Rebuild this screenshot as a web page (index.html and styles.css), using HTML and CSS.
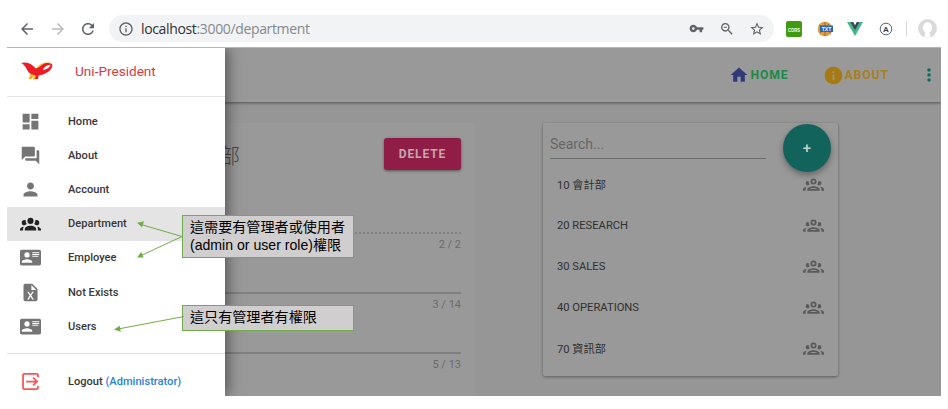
FILE: index.html
```html
<!DOCTYPE html>
<html lang="zh-Hant">
<head>
<meta charset="utf-8">
<title>Department</title>
<link rel="stylesheet" href="styles.css">
</head>
<body>
<svg class="defs" width="0" height="0">
  <symbol id="group" viewBox="0 0 24 24"><path d="M12,5A3.5,3.5 0 0,0 8.5,8.5A3.5,3.5 0 0,0 12,12A3.5,3.5 0 0,0 15.5,8.5A3.5,3.5 0 0,0 12,5M12,7A1.5,1.5 0 0,1 13.5,8.5A1.5,1.5 0 0,1 12,10A1.5,1.5 0 0,1 10.5,8.5A1.5,1.5 0 0,1 12,7M5.5,8A2.5,2.5 0 0,0 3,10.5C3,11.44 3.53,12.25 4.29,12.68C4.65,12.88 5.06,13 5.5,13C5.94,13 6.35,12.88 6.71,12.68C7.08,12.47 7.39,12.17 7.62,11.81C6.89,10.86 6.5,9.7 6.5,8.5C6.5,8.41 6.5,8.31 6.5,8.22C6.2,8.08 5.86,8 5.5,8M18.5,8C18.14,8 17.8,8.08 17.5,8.22C17.5,8.31 17.5,8.41 17.5,8.5C17.5,9.7 17.11,10.86 16.38,11.81C16.5,12 16.63,12.15 16.78,12.3C16.94,12.45 17.1,12.58 17.29,12.68C17.65,12.88 18.06,13 18.5,13C18.94,13 19.35,12.88 19.71,12.68C20.47,12.25 21,11.44 21,10.5A2.5,2.5 0 0,0 18.5,8M12,14C9.66,14 5,15.17 5,17.5V19H19V17.5C19,15.17 14.34,14 12,14M4.71,14.55C2.78,14.78 0,15.76 0,17.5V19H3V17.07C3,16.06 3.69,15.22 4.71,14.55M19.29,14.55C20.31,15.22 21,16.06 21,17.07V19H24V17.5C24,15.76 21.22,14.78 19.29,14.55M12,16C13.53,16 15.24,16.5 16.23,17H7.77C8.76,16.5 10.47,16 12,16Z"/></symbol>
  <symbol id="card" viewBox="0 0 24 24"><path d="M2,3H22C23.05,3 24,3.95 24,5V19C24,20.05 23.05,21 22,21H2C.95,21 0,20.05 0,19V5C0,3.95 .95,3 2,3M14,6V7H22V6H14M14,8V9H22V8H14M14,10V11H21V10H14M8,13.91C6,13.91 2,15 2,17V18H14V17C14,15 10,13.91 8,13.91M8,6A3,3 0 0,0 5,9A3,3 0 0,0 8,12A3,3 0 0,0 11,9A3,3 0 0,0 8,6Z"/></symbol>
</svg>
<div class="window">
  <div class="browser">
    <svg class="nav" viewBox="0 0 24 24"><path d="M20 11H7.83l5.59-5.59L12 4l-8 8 8 8 1.41-1.41L7.83 13H20v-2z"/></svg>
    <svg class="nav nav-off" viewBox="0 0 24 24"><path d="M4 11H16.17l-5.59-5.59L12 4l8 8-8 8-1.41-1.41L16.17 13H4v-2z"/></svg>
    <svg class="nav" viewBox="0 0 24 24"><path d="M17.65 6.35C16.2 4.9 14.21 4 12 4c-4.42 0-7.99 3.58-7.99 8s3.57 8 7.99 8c3.73 0 6.84-2.55 7.73-6h-2.08c-.82 2.33-3.04 4-5.65 4-3.31 0-6-2.69-6-6s2.69-6 6-6c1.66 0 3.14.69 4.22 1.78L13 11h7V4l-2.35 2.35z"/></svg>
    <div class="address">
      <svg class="site" viewBox="0 0 24 24"><path d="M11 17h2v-6h-2v6zm1-15C6.48 2 2 6.48 2 12s4.48 10 10 10 10-4.48 10-10S17.52 2 12 2zm0 18c-4.41 0-8-3.59-8-8s3.59-8 8-8 8 3.59 8 8-3.59 8-8 8zM11 9h2V7h-2v2z"/></svg>
      <span class="url">localhost<span>:3000/department</span></span>
      <svg class="tool key" viewBox="0 0 24 24"><path d="M12.65 10C11.83 7.67 9.61 6 7 6c-3.31 0-6 2.69-6 6s2.69 6 6 6c2.61 0 4.83-1.67 5.65-4H17v4h4v-4h2v-4H12.65zM7 14c-1.1 0-2-.9-2-2s.9-2 2-2 2 .9 2 2-.9 2-2 2z"/></svg>
      <svg class="tool" viewBox="0 0 24 24"><path d="M15.5 14h-.79l-.28-.27C15.41 12.59 16 11.11 16 9.5 16 5.91 13.09 3 9.5 3S3 5.91 3 9.5 5.91 16 9.5 16c1.61 0 3.09-.59 4.23-1.57l.27.28v.79l5 4.99L20.49 19l-4.99-5zm-6 0C7.01 14 5 11.99 5 9.5S7.01 5 9.5 5 14 7.01 14 9.5 11.99 14 9.5 14zM7 8.8h5v1.4H7z"/></svg>
      <svg class="tool" viewBox="0 0 24 24"><path d="M22 9.24l-7.19-.62L12 2 9.19 8.63 2 9.24l5.46 4.73L5.82 21 12 17.27 18.18 21l-1.63-7.03L22 9.24zM12 15.4l-3.76 2.27 1-4.28-3.32-2.88 4.38-.38L12 6.1l1.71 4.04 4.38.38-3.32 2.88 1 4.28L12 15.4z"/></svg>
    </div>
    <div class="extensions">
      <svg viewBox="0 0 16 16"><rect width="16" height="16" rx="2" fill="#3f9c10"/><text class="ext-cors" x="8" y="10.500" text-anchor="middle" textLength="12" lengthAdjust="spacingAndGlyphs">CORS</text></svg>
      <svg viewBox="0 0 16 16"><circle cx="8" cy="8" r="7.3" fill="#e59a35"/><path d="M2 4l12 8M8 1v14M3 12l9-9" stroke="#8d6a3d" fill="none"/><rect x="3" y="4.5" width="13" height="6.5" fill="#2767b5"/><text class="ext-txt" x="9.5" y="10" text-anchor="middle">TXT</text></svg>
      <svg viewBox="0 0 16 16"><path d="M0 1h3.2L8 9.2 12.8 1H16L8 15z" fill="#41b883"/><path d="M3.2 1h3L8 4.2 9.8 1h3L8 9.4z" fill="#35495e"/></svg>
      <svg viewBox="0 0 16 16"><circle cx="8" cy="8" r="5.8" fill="none" stroke="#40566e" stroke-width=".9"/><text class="ext-a" x="8" y="11" text-anchor="middle">A</text></svg>
      <i class="bar"></i>
      <svg class="profile" viewBox="0 0 19 19"><circle cx="9.5" cy="9.5" r="9.4" fill="#dadada"/><path d="M9.5 3.2a4.6 5 0 0 0-4.6 5c0 2.3 1.1 4 2.4 5.3L6.5 18q3 1.2 6 0l-.8-4.5c1.3-1.3 2.4-3 2.4-5.3a4.6 5 0 0 0-4.6-5z" fill="#fff"/></svg>
    </div>
  </div>

  <div class="app">
    <header class="appbar">
      <a class="link home"><svg viewBox="0 0 24 24"><path d="M10 20v-6h4v6h5v-8h3L12 3 2 12h3v8z"/></svg><span>HOME</span></a>
      <a class="link about"><svg viewBox="0 0 24 24"><path d="M12 2C6.48 2 2 6.48 2 12s4.48 10 10 10 10-4.48 10-10S17.52 2 12 2zm1 15h-2v-6h2v6zm0-8h-2V7h2v2z"/></svg><span>ABOUT</span></a>
      <svg class="more" viewBox="0 0 4 14"><circle cx="2" cy="2" r="1.8"/><circle cx="2" cy="7" r="1.8"/><circle cx="2" cy="12" r="1.8"/></svg>
    </header>
    <main class="content">
      <section class="editor">
        <div class="editor-head"><h1>會計部</h1><button class="delete">DELETE</button></div>
        <div class="field locked"><small>2 / 2</small></div>
        <div class="field"><small>3 / 14</small></div>
        <div class="field"><small>5 / 13</small></div>
      </section>
      <section class="list">
        <div class="search"><span>Search...</span></div>
        <button class="add">+</button>
        <div class="row"><span>10 會計部</span><svg><use href="#group"/></svg></div>
        <div class="row"><span>20 RESEARCH</span><svg><use href="#group"/></svg></div>
        <div class="row"><span>30 SALES</span><svg><use href="#group"/></svg></div>
        <div class="row"><span>40 OPERATIONS</span><svg><use href="#group"/></svg></div>
        <div class="row"><span>70 資訊部</span><svg><use href="#group"/></svg></div>
      </section>
    </main>

    <aside class="drawer">
      <div class="brand">
        <svg viewBox="0 0 32 18"><path d="M10 11L7.500 17h3.200L13 13zM14 12l-2.500 5.400h3L17 13z" fill="#f5b21c"/><path d="M14 8.500C17 2 24-.5 30 .8c-4 .4-7 2.200-9 5.200l-5 4z" fill="#f8b52a"/><path d="M0 1c4-1.200 8-.6 11 2l4 3.400c3-.6 4-1.800 6-3.400C24 .8 28 .6 31 2c1.500 4-3 9-10 10.800l-3.300.6L17 17h-3l1-3.600c-4-.4-7-2-8.500-4.900L4.800 5.500C3.500 3 2 2 0 1z" fill="#ed1c24"/><path d="M22.500 6.500c2-2.500 4.500-3.700 7.200-3.700C28.500 5.600 26 7.300 22 8.300z" fill="#fff"/></svg>
        <span>Uni-President</span>
      </div>
      <nav>
        <a class="item"><svg viewBox="0 0 24 24"><path d="M3 13h8V3H3v10zm0 8h8v-6H3v6zm10 0h8V11h-8v10zm0-18v6h8V3h-8z"/></svg>Home</a>
        <a class="item"><svg viewBox="0 0 24 24"><path d="M21 6h-2v9H6v2c0 .55.45 1 1 1h11l4 4V7c0-.55-.45-1-1-1zm-4 6V3c0-.55-.45-1-1-1H3c-.55 0-1 .45-1 1v14l4-4h10c.55 0 1-.45 1-1z"/></svg>About</a>
        <a class="item"><svg viewBox="0 0 24 24"><path d="M12 12c2.21 0 4-1.79 4-4s-1.79-4-4-4-4 1.79-4 4 1.79 4 4 4zm0 2c-2.67 0-8 1.34-8 4v2h16v-2c0-2.66-5.33-4-8-4z"/></svg>Account</a>
        <a class="item active"><svg viewBox="0 0 24 24"><path d="M12,5.500A3.500,3.500 0 0,1 15.500,9A3.500,3.500 0 0,1 12,12.500A3.500,3.500 0 0,1 8.500,9A3.500,3.500 0 0,1 12,5.500M5,8C5.560,8 6.080,8.150 6.530,8.420C6.380,9.850 6.800,11.270 7.660,12.380C7.160,13.340 6.160,14 5,14A3,3 0 0,1 2,11A3,3 0 0,1 5,8M19,8A3,3 0 0,1 22,11A3,3 0 0,1 19,14C17.840,14 16.840,13.340 16.340,12.380C17.200,11.270 17.620,9.850 17.470,8.420C17.920,8.150 18.440,8 19,8M5.500,18.250C5.500,16.180 8.410,14.500 12,14.500C15.590,14.500 18.500,16.180 18.500,18.250V20H5.500V18.250M0,20V18.500C0,17.110 1.890,15.940 4.450,15.600C3.860,16.280 3.500,17.220 3.500,18.250V20H0M24,20H20.500V18.250C20.500,17.220 20.140,16.280 19.550,15.600C22.110,15.940 24,17.110 24,18.500V20Z"/></svg>Department</a>
        <a class="item"><svg><use href="#card"/></svg>Employee</a>
        <a class="item"><svg viewBox="0 0 24 24"><path d="M14,2H6A2,2 0 0,0 4,4V20A2,2 0 0,0 6,22H18A2,2 0 0,0 20,20V8L14,2M15.8,20H14L12,16.6L10,20H8.2L11.1,15.5L8.2,11H10L12,14.4L14,11H15.8L12.9,15.5L15.8,20M13,9V3.5L18.5,9H13Z"/></svg>Not Exists</a>
        <a class="item"><svg><use href="#card"/></svg>Users</a>
      </nav>
      <a class="item logout"><svg viewBox="0 0 24 24"><path d="M20.500 7V4.500a1.300 1.300 0 0 0-1.300-1.300H4.800a1.300 1.300 0 0 0-1.300 1.300v15a1.300 1.300 0 0 0 1.300 1.300h14.400a1.300 1.300 0 0 0 1.300-1.300V17M7 12h12.500M15 7.500l4.500 4.500-4.500 4.500"/></svg><span>Logout <b>(Administrator)</b></span></a>
    </aside>
  </div>

  <div class="callout roles">這需要有管理者或使用者<br>(admin or user role)權限</div>
  <div class="callout admin">這只有管理者有權限</div>
  <svg class="arrows" viewBox="100 210 90 130"><path d="M182 236.500L141 224.500M182 236.500L141 255.500M184 316.500L118 329"/><path class="tip" d="M137 222.700l7-1.400-2 6zM137 257.500l4.200-5.600 2.500 5.500zM114 329.600l5.800-3.900 1 6z"/></svg>
</div>
</body>
</html>
```

FILE: styles.css
```css
* { box-sizing: border-box; }
body { margin: 0; background: #fff; font-family: Roboto, "Noto Sans CJK TC", sans-serif; }
svg { display: block; flex: none; fill: currentColor; }
.defs { position: absolute; }
.window { position: relative; width: 934px; margin-left: 7px; overflow: hidden; }

.browser { height: 48px; padding-top: 10px; display: flex; align-items: center; border-bottom: 1px solid #b5b5b5; color: #5f6368; }
.nav { width: 18px; height: 18px; margin: 0 1px 0 11px; }
.nav + .nav { margin-left: 11.500px; }
.nav-off { color: #b9bbbe; }
.address { display: flex; align-items: center; width: 665px; height: 27px; margin-left: 11px; padding: 0 9px 0 9px; border-radius: 14px; background: #f1f3f4; }
.site { width: 16px; height: 16px; }
.url { flex: 1; margin-left: 7px; font: 14px "Open Sans", sans-serif; letter-spacing: -.35px; color: #303236; }
.url span { color: #85898d; }
.tool { width: 16px; height: 16px; margin-left: 14.500px; }
.tool.key { width: 15px; height: 15px; }
.extensions { display: flex; align-items: center; gap: 14.500px; margin-left: 12px; }
.extensions svg { width: 16px; height: 16px; }
.ext-cors { font: bold 6px "Liberation Sans", sans-serif; fill: #fff; }
.ext-txt { font: bold 5px "Liberation Sans", sans-serif; fill: #fff; }
.ext-a { font: bold 8px "Liberation Sans", sans-serif; fill: #2c4059; }
.bar { width: 1px; height: 15px; background: #d5d7d9; margin: 0 -4px 0 -2px; }
.extensions .profile { width: 19px; height: 19px; }

.app { position: relative; height: 348px; overflow: hidden; background: #969696; display: flex; flex-direction: column; }
.appbar { position: relative; height: 54px; flex: none; display: flex; align-items: center; justify-content: flex-end; padding-right: 10px; background: #999; box-shadow: 0 1px 3px rgba(0,0,0,.45); }
.link { display: flex; align-items: center; font-size: 12.200px; font-weight: 700; letter-spacing: .9px; }
.home { color: #1c8a45; margin-right: 34px; }
.home svg { width: 20px; height: 20px; color: #303a7a; margin-right: 1px; }
.about { color: #a87f1c; margin-right: 38px; }
.about svg { width: 21px; height: 21px; color: #a67a10; margin-right: 1px; }
.more { width: 4px; height: 14px; color: #0d6b62; }

.content { display: flex; align-items: flex-start; padding-top: 21px; }
.editor { width: 468px; height: 290px; padding: 15px 14px 0 170px; background: #999; border-radius: 3px; }
.editor-head { display: flex; justify-content: space-between; align-items: center; height: 32px; }
h1 { margin: 0; font: 300 21px/32px "Noto Sans CJK TC", sans-serif; color: #484848; }
.delete { width: 77px; height: 32px; padding: 0; border: 0; border-radius: 3px; background: #8f1d45; color: #c4a6b0; font: 700 12px Roboto, sans-serif; letter-spacing: .9px; box-shadow: 0 1px 3px rgba(0,0,0,.45); }
.field { height: 60px; margin-left: -150px; border-top: 2px solid #808080; padding-top: 4px; text-align: right; }
.field.locked { margin-top: 62px; border-top: 2px dotted #828282; }
.field small { display: block; font-size: 11px; line-height: 14px; color: #6a6a6a; }

.list { position: relative; width: 295px; height: 253px; margin-left: 68px; padding: 6px 14px 0 7px; background: #999; border-radius: 2px; box-shadow: 0 1px 3px rgba(0,0,0,.4); }
.search { width: 216px; height: 30px; border-bottom: 1px solid #6d6d6d; font-size: 14px; line-height: 31px; color: #666; margin-bottom: 5px; }
.add { position: absolute; top: 1px; right: 7px; width: 48px; height: 48px; padding: 0; border: 0; border-radius: 50%; background: #11635b; color: #bcd0ce; font: 500 15px Roboto, sans-serif; box-shadow: 0 3px 6px rgba(0,0,0,.35); }
.row { display: flex; align-items: center; justify-content: space-between; height: 41px; padding-left: 7px; font-size: 11.200px; color: #303030; }
.row span { padding-bottom: 1px; }
.row svg { width: 21px; height: 21px; color: #5a5a5a; }

.drawer { position: absolute; left: 0; top: 0; bottom: 0; width: 218px; background: #fff; box-shadow: 2px 0 14px rgba(0,0,0,.5); }
.brand { display: flex; align-items: center; height: 49px; padding: 0 0 2px 14px; border-bottom: 1px solid #e4e4e4; font-size: 13.600px; color: #d93a3e; }
.brand svg { width: 32px; height: 18px; margin-right: 22px; }
nav { padding: 7px 0 10px; border-bottom: 1px solid #e0e0e0; }
.item { display: flex; align-items: center; height: 34.200px; padding-left: 13px; font-size: 11.100px; font-weight: 500; color: #383838; }
.item svg { width: 21px; height: 21px; margin-right: 27px; color: #757575; }
.item.active { background: #e4e4e4; }
.item.active svg { color: #222; }
.item.logout { margin-top: 10px; }
.item.logout svg { fill: none; stroke: #ff5252; stroke-width: 2; }
.logout b { font-weight: 500; color: #2b7fdb; }

.callout { position: absolute; left: 175px; width: 172px; padding: 2px 7px; border: 1px solid #70ad47; background: #d0cece; color: #000; font: 14.100px/18px "Liberation Sans", "Noto Sans CJK TC", sans-serif; white-space: nowrap; }
.roles { top: 215px; height: 43px; }
.admin { top: 305px; height: 26px; }
.arrows { position: absolute; left: 93px; top: 210px; width: 90px; height: 130px; fill: none; stroke: #70ad47; }
.tip { fill: #70ad47; stroke: none; }
```
